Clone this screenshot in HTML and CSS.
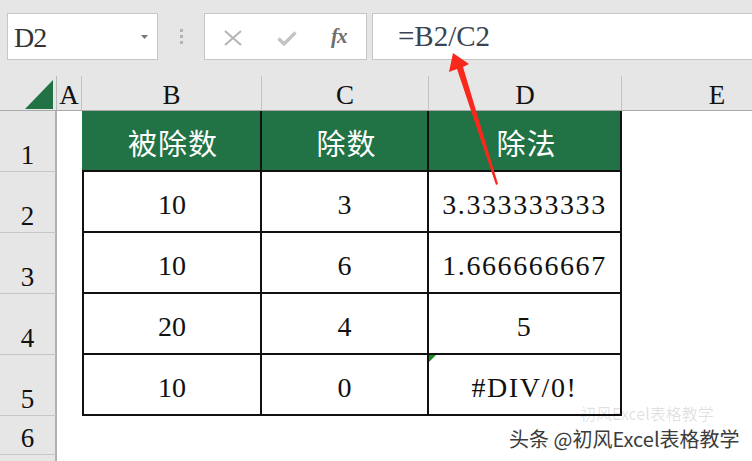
FILE: index.html
```html
<!DOCTYPE html>
<html lang="zh-CN">
<head>
  <meta charset="UTF-8" />
  <title>除法 - Excel</title>
  <link rel="stylesheet" href="styles.css">
</head>
<body>
  <div class="page">

    <!-- Formula bar -->
    <div class="formula-bar">
      <div class="name-box">
        <span>D2</span>
        <svg class="caret" width="7" height="4" viewBox="0 0 7 4"><path d="M0 0h7L3.5 4z" fill="#777"/></svg>
      </div>
      <div class="grip"><i></i><i></i><i></i></div>
      <div class="fx-buttons">
        <svg class="btn-x" width="20" height="16" viewBox="0 0 20 16"><path d="M2 1L18 15M18 1L2 15" stroke="#b4b4b4" stroke-width="2" fill="none"/></svg>
        <svg class="btn-ok" width="20" height="15" viewBox="0 0 20 15"><path d="M1.5 7.5L7 13L18.5 1.5" stroke="#c4c4c4" stroke-width="3.4" fill="none"/></svg>
        <span class="fx">fx</span>
      </div>
      <div class="formula-input">=B2/C2</div>
    </div>

    <!-- Sheet -->
    <div class="sheet">
      <div class="hd corner"><span class="select-all"></span></div>
      <div class="hd col">A</div>
      <div class="hd col">B</div>
      <div class="hd col">C</div>
      <div class="hd col">D</div>
      <div class="hd col last">E</div>

      <div class="hd row">1</div>
      <div class="cell"></div>
      <div class="cell title first">被除数</div>
      <div class="cell title">除数</div>
      <div class="cell title">除法</div>
      <div class="cell"></div>

      <div class="hd row">2</div>
      <div class="cell"></div>
      <div class="cell data first">10</div>
      <div class="cell data">3</div>
      <div class="cell data num">3.333333333</div>
      <div class="cell"></div>

      <div class="hd row">3</div>
      <div class="cell"></div>
      <div class="cell data first">10</div>
      <div class="cell data">6</div>
      <div class="cell data num">1.666666667</div>
      <div class="cell"></div>

      <div class="hd row">4</div>
      <div class="cell"></div>
      <div class="cell data first">20</div>
      <div class="cell data">4</div>
      <div class="cell data num">5</div>
      <div class="cell"></div>

      <div class="hd row">5</div>
      <div class="cell"></div>
      <div class="cell data first">10</div>
      <div class="cell data">0</div>
      <div class="cell data num error">#DIV/0!</div>
      <div class="cell"></div>

      <div class="hd row">6</div>
      <div class="cell"></div>
      <div class="cell"></div>
      <div class="cell"></div>
      <div class="cell"></div>
      <div class="cell"></div>

      <div class="hd row"></div>
      <div class="cell"></div>
      <div class="cell"></div>
      <div class="cell"></div>
      <div class="cell"></div>
      <div class="cell"></div>
    </div>

    <!-- annotation arrow -->
    <svg class="arrow" width="752" height="461" viewBox="0 0 752 461">
      <polygon points="453,53 469,64 463,67 498,184 496,185 457,69 449,72" fill="#f8281c"/>
    </svg>

    <div class="watermark-ghost">初风Excel表格教学</div>
    <div class="watermark">头条 @初风Excel表格教学</div>
  </div>
</body>
</html>
```

FILE: styles.css
```css
body {
  margin: 0;
  background: #fff;
  font-family: "Liberation Serif", "Noto Sans CJK SC", serif;
}

.page {
  position: relative;
  width: 752px;
  height: 461px;
  overflow: hidden;
  background: #fff;
}

/* formula bar */
.formula-bar {
  display: flex;
  align-items: flex-start;
  height: 76px;
  box-sizing: border-box;
  padding: 13px 0 0 7px;
  background: #e6e6e6;
}

.name-box {
  width: 151px;
  height: 47px;
  box-sizing: border-box;
  border: 1px solid #c6c6c6;
  background: #fff;
  display: flex;
  align-items: center;
  justify-content: space-between;
  padding: 0 9px 0 6px;
  font-size: 28px;
  color: #333;
}

.name-box span {
  letter-spacing: -1px;
  padding-top: 2px;
}

.grip {
  width: 46px;
  height: 47px;
  display: flex;
  flex-direction: column;
  align-items: center;
  justify-content: center;
  gap: 3px;
}

.grip i {
  display: block;
  width: 3px;
  height: 3px;
  background: #b3b3b3;
}

.fx-buttons {
  width: 163px;
  height: 47px;
  box-sizing: border-box;
  border: 1px solid #c6c6c6;
  background: #fff;
  display: flex;
  align-items: center;
  padding-left: 18px;
}

.btn-x {
  margin-top: 2px;
}

.btn-ok {
  margin-left: 34px;
  margin-top: 3px;
}

.fx {
  margin-left: 34px;
  font-style: italic;
  font-weight: bold;
  font-size: 21px;
  color: #6e6e6e;
  letter-spacing: -1px;
}

.formula-input {
  flex: 1;
  height: 47px;
  box-sizing: border-box;
  margin-left: 5px;
  border: 1px solid #c6c6c6;
  border-right: none;
  background: #fff;
  padding: 6px 0 0 25px;
  font-size: 29px;
  color: #3a4350;
}

/* grid */
.sheet {
  display: grid;
  grid-template-columns: 57px 25px 180px 167px 193px 130px;
  grid-template-rows: 35px repeat(5, 61px) 39px 10px;
}

.hd {
  background: #e6e6e6;
  color: #111;
  font-family: "Liberation Serif", serif;
  font-size: 27px;
  line-height: 1;
  box-sizing: border-box;
  display: flex;
  justify-content: center;
}

.corner {
  border-right: 1px solid #b8b8b8;
  border-bottom: 1px solid #a8a8a8;
  align-items: flex-end;
  justify-content: flex-end;
  padding: 0 3px 1px 0;
}

.select-all {
  width: 28px;
  height: 29px;
  background: #217346;
  clip-path: polygon(100% 0, 100% 100%, 0 100%);
}

.col {
  border-right: 1px solid #c3c3c3;
  border-bottom: 1px solid #a8a8a8;
  align-items: center;
  padding-top: 5px;
}

.col.last {
  border-right: none;
  padding-left: 60px;
}

.row {
  border-right: 2px solid #b0b0b0;
  border-bottom: 1px solid #c6c6c6;
  align-items: flex-end;
  padding-bottom: 2px;
}

.cell {
  box-sizing: border-box;
  display: flex;
  align-items: center;
  justify-content: center;
  position: relative;
}

.title {
  background: #217346;
  color: #fff;
  font-family: "Noto Sans CJK SC", sans-serif;
  font-size: 29px;
  letter-spacing: 1px;
  border-right: 2px solid #111;
  border-bottom: 2px solid #111;
  padding: 2px 0 0 4px;
}

.data {
  font-family: "Liberation Serif", serif;
  font-size: 28px;
  color: #111;
  border-right: 2px solid #111;
  border-bottom: 2px solid #111;
  padding-top: 6px;
}

.first {
  border-left: 2px solid #111;
}

.title.first {
  border-left: none;
}

.num {
  letter-spacing: 1.6px;
}

.error::before {
  content: "";
  position: absolute;
  left: 0;
  top: 0;
  width: 7px;
  height: 7px;
  background: #1a8a24;
  clip-path: polygon(0 0, 100% 0, 0 100%);
}

/* overlays */
.arrow {
  position: absolute;
  left: 0;
  top: 0;
  pointer-events: none;
}

.watermark {
  position: absolute;
  left: 509px;
  top: 429px;
  font-family: "Noto Sans CJK SC", sans-serif;
  font-size: 20px;
  line-height: 1;
  color: #3c3c3c;
  text-shadow: 0 0 2px #fff, 0 0 2px #fff;
}

.watermark-ghost {
  position: absolute;
  left: 580px;
  top: 405px;
  font-family: "Noto Sans CJK SC", sans-serif;
  font-size: 16px;
  line-height: 1;
  color: rgba(0, 0, 0, 0.13);
}
```
